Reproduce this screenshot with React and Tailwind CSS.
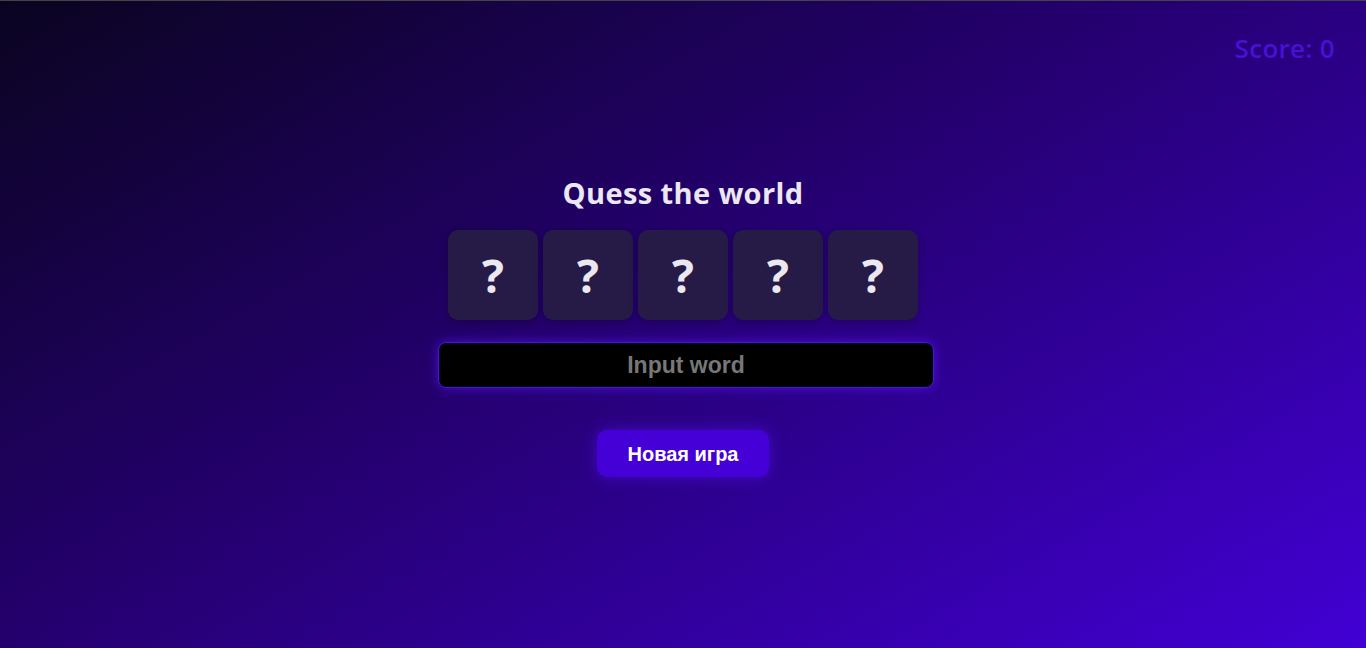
import React from "react";

export default function App() {
  return (
    <div className="relative min-h-[648px] w-full border-t border-[#444] bg-[linear-gradient(150deg,#0a0420_0%,#24006e_45%,#4200d4_100%)]">
      <div className="absolute right-[31px] top-[28px] font-['Open_Sans',sans-serif] text-[26px] font-semibold tracking-[0.3px] text-[#4612d4]">
        Score: 0
      </div>

      <div className="flex flex-col items-center pt-[172px]">
        <h1 className="font-['Open_Sans',sans-serif] text-[29px] font-bold leading-[40px] tracking-[0.4px] text-[#ece8f2]">
          Quess the world
        </h1>

        <div className="mt-[17px] flex gap-[5px]">
          {[0, 1, 2, 3, 4].map((i) => (
            <div
              key={i}
              className="flex h-[90px] w-[90px] items-center justify-center rounded-[10px] bg-[#261a47] shadow-[0_2px_8px_rgba(0,0,0,0.25)]"
            >
              <span className="font-['Open_Sans',sans-serif] text-[46px] font-bold leading-none text-[#ece8f2]">
                ?
              </span>
            </div>
          ))}
        </div>

        <input
          placeholder="Input word"
          className="ml-[6px] mt-[22px] h-[46px] w-[496px] rounded-[8px] border border-[#4a12e0] bg-black text-center font-['Liberation_Sans',Arial,sans-serif] text-[23px] font-bold text-white shadow-[0_0_12px_rgba(80,20,240,0.75)] outline-none placeholder:text-[#777]"
        />

        <button className="mt-[42px] h-[47px] w-[172px] rounded-[10px] bg-[#4400d6] font-['Liberation_Sans',Arial,sans-serif] text-[20px] font-bold text-white shadow-[0_0_16px_rgba(80,20,240,0.6)]">
          Новая игра
        </button>
      </div>
    </div>
  );
}
